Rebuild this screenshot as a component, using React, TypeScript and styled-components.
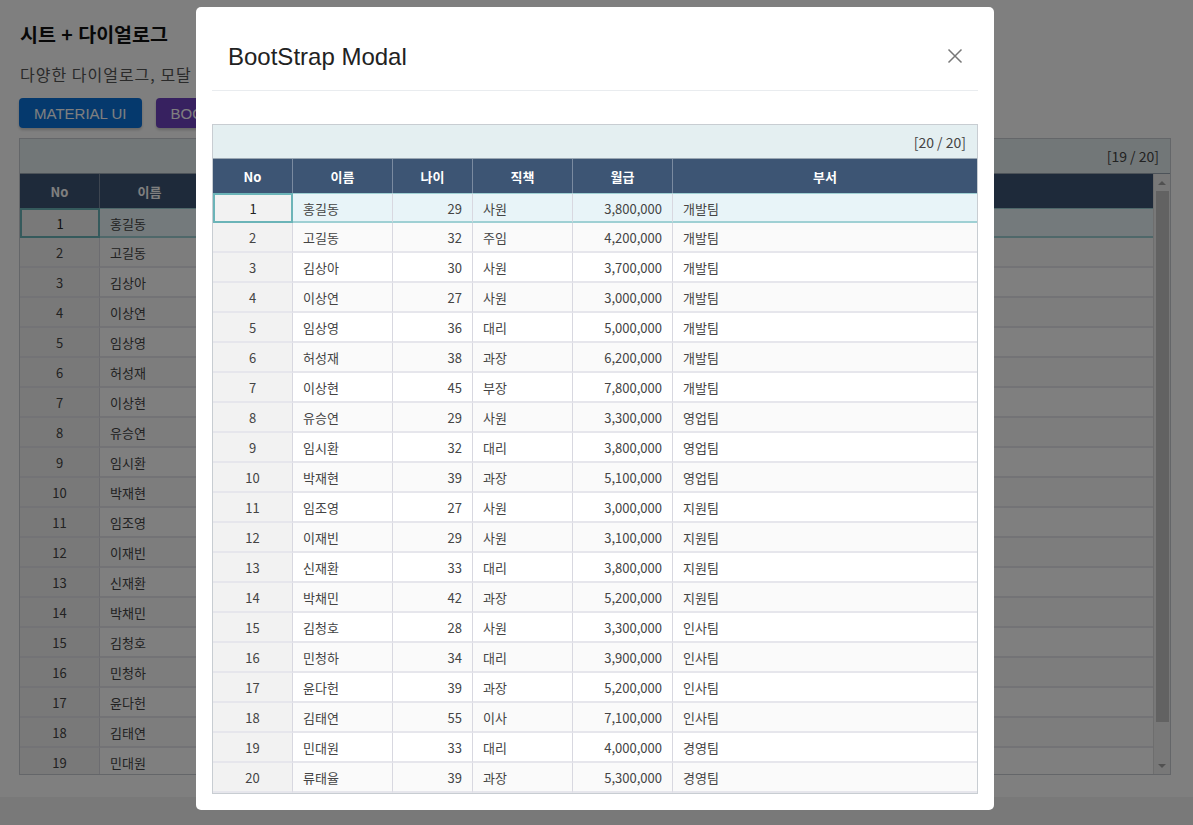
import styled, { createGlobalStyle, css } from "styled-components";

const GlobalStyle = createGlobalStyle`
  html, body {
    margin: 0;
    padding: 0;
    background: #f3f3f3;
  }
  body {
    font-family: "Noto Sans CJK KR", "Noto Sans", sans-serif;
    color: #333;
  }
`;

type Row = [number, string, number, string, string, string];

const rows: Row[] = [
  [1, "홍길동", 29, "사원", "3,800,000", "개발팀"],
  [2, "고길동", 32, "주임", "4,200,000", "개발팀"],
  [3, "김상아", 30, "사원", "3,700,000", "개발팀"],
  [4, "이상연", 27, "사원", "3,000,000", "개발팀"],
  [5, "임상영", 36, "대리", "5,000,000", "개발팀"],
  [6, "허성재", 38, "과장", "6,200,000", "개발팀"],
  [7, "이상현", 45, "부장", "7,800,000", "개발팀"],
  [8, "유승연", 29, "사원", "3,300,000", "영업팀"],
  [9, "임시환", 32, "대리", "3,800,000", "영업팀"],
  [10, "박재현", 39, "과장", "5,100,000", "영업팀"],
  [11, "임조영", 27, "사원", "3,000,000", "지원팀"],
  [12, "이재빈", 29, "사원", "3,100,000", "지원팀"],
  [13, "신재환", 33, "대리", "3,800,000", "지원팀"],
  [14, "박채민", 42, "과장", "5,200,000", "지원팀"],
  [15, "김청호", 28, "사원", "3,300,000", "인사팀"],
  [16, "민청하", 34, "대리", "3,900,000", "인사팀"],
  [17, "윤다헌", 39, "과장", "5,200,000", "인사팀"],
  [18, "김태연", 55, "이사", "7,100,000", "인사팀"],
  [19, "민대원", 33, "대리", "4,000,000", "경영팀"],
  [20, "류태율", 39, "과장", "5,300,000", "경영팀"],
];

const columns = ["No", "이름", "나이", "직책", "월급", "부서"];
const align: ("center" | "left" | "right")[] = ["center", "left", "right", "left", "right", "left"];
const COLS = "80px 100px 80px 100px 100px 1fr";

/* ---------- page behind the modal ---------- */

const Page = styled.div`
  background: #fff;
  min-height: 797px;
  padding: 20px 22px 0 19px;
  box-sizing: border-box;
`;

const Title = styled.h2`
  margin: 0 0 0 1px;
  font-size: 19.5px;
  line-height: 28px;
  font-weight: 700;
  color: #111;
  word-spacing: 1px;
`;

const Sub = styled.p`
  margin: 14px 0 0 1px;
  font-size: 16px;
  line-height: 24px;
  color: #555;
  letter-spacing: 1px;
`;

const ButtonRow = styled.div`
  display: flex;
  gap: 14px;
  margin-top: 12px;
`;

const Btn = styled.button<{ $color: string }>`
  height: 30px;
  padding: 0 15px;
  border: none;
  border-radius: 4px;
  background: ${(p) => p.$color};
  color: #fff;
  font-family: "Liberation Sans", Arial, sans-serif;
  font-size: 15px;
  box-shadow: 0 2px 3px rgba(0, 0, 0, 0.2);
`;

const Sheet = styled.div<{ $width?: string }>`
  width: ${(p) => p.$width || "100%"};
  border: 1px solid #c8cdd2;
  box-sizing: border-box;
  background: #fff;
  font-size: 13px;
`;

const InfoBar = styled.div<{ $h: number }>`
  height: ${(p) => p.$h}px;
  background: #e4eff1;
  border-bottom: 1px solid #9aa7b3;
  display: flex;
  align-items: center;
  justify-content: flex-end;
  padding-right: 11px;
  color: #444;
  font-size: 14px;
  box-sizing: border-box;
`;

const GridRow = styled.div<{ $h: number }>`
  display: grid;
  grid-template-columns: ${COLS};
  height: ${(p) => p.$h}px;
`;

const HeadCell = styled.div`
  background: #3d5574;
  color: #fff;
  font-weight: 700;
  display: flex;
  align-items: center;
  justify-content: center;
  border-right: 1px solid #7a8aa0;
  &:last-child {
    border-right: none;
  }
`;

const Cell = styled.div<{ $align: string; $no?: boolean; $alt?: boolean; $sel?: boolean }>`
  display: flex;
  align-items: center;
  justify-content: ${(p) => (p.$align === "center" ? "center" : p.$align === "right" ? "flex-end" : "flex-start")};
  padding: 1px 10px 0;
  background: ${(p) => (p.$no ? "#f2f2f2" : p.$alt ? "#fafafa" : "#fff")};
  color: #444;
  border-right: 1px solid #d8d8e0;
  border-bottom: 2px solid #e6e6ec;
  box-sizing: border-box;
  white-space: nowrap;
  &:last-child {
    border-right: none;
  }
  ${(p) =>
    p.$sel &&
    css`
      background: ${p.$no ? "#f2f2f2" : "#e8f4f8"};
      border-top: 1px solid #9fd0d4;
      border-bottom: 2px solid #9fd0d4;
    `}
  ${(p) =>
    p.$sel &&
    p.$no &&
    css`
      border: 2px solid #6bb4b8;
      color: #222;
    `}
`;

const Body = styled.div<{ $h?: number }>`
  position: relative;
  overflow: hidden;
  ${(p) => p.$h && css`height: ${p.$h}px;`}
`;

const BgGridWrap = styled.div`
  display: grid;
  grid-template-columns: 1fr 17px;
`;

const Scrollbar = styled.div`
  background: #f1f1f1;
  border-left: 1px solid #ddd;
  display: flex;
  flex-direction: column;
  align-items: center;
`;

const Arrow = styled.div<{ $down?: boolean }>`
  height: 17px;
  display: flex;
  align-items: center;
  justify-content: center;
  &::after {
    content: "";
    border-left: 4px solid transparent;
    border-right: 4px solid transparent;
    ${(p) => (p.$down ? "border-top: 4px solid #a3a3a3;" : "border-bottom: 4px solid #a3a3a3;")}
  }
`;

const Thumb = styled.div`
  width: 13px;
  height: 531px;
  background: #c4c4c4;
`;

const Spacer = styled.div`
  flex: 1;
`;

const SheetSlot = styled.div`
  margin-top: 10px;
`;

function SheetRows({ count }: { count: number }) {
  return (
    <>
      {rows.slice(0, count).map((r, i) => (
        <GridRow $h={30} key={r[0]}>
          {r.map((v, j) => (
            <Cell key={j} $align={align[j]} $no={j === 0} $alt={i % 2 === 1} $sel={i === 0}>
              {v}
            </Cell>
          ))}
        </GridRow>
      ))}
    </>
  );
}

function HeaderRow({ h }: { h: number }) {
  return (
    <GridRow $h={h}>
      {columns.map((c) => (
        <HeadCell key={c}>{c}</HeadCell>
      ))}
    </GridRow>
  );
}

/* ---------- modal ---------- */

const Backdrop = styled.div`
  position: fixed;
  inset: 0;
  background: rgba(0, 0, 0, 0.5);
`;

const Modal = styled.div`
  position: fixed;
  left: 196px;
  top: 7px;
  width: 798px;
  height: 803px;
  background: #fff;
  border-radius: 5px;
  padding: 0 16px;
  box-sizing: border-box;
  display: flex;
  flex-direction: column;
`;

const ModalHeader = styled.div`
  height: 84px;
  border-bottom: 1px solid #e9ecef;
  display: flex;
  align-items: center;
  justify-content: space-between;
  padding: 16px 16px 0;
  box-sizing: border-box;
`;

const ModalTitle = styled.h4`
  margin: 0;
  font-family: "Liberation Sans", Arial, sans-serif;
  font-weight: 400;
  font-size: 24px;
  color: #222;
`;

const Close = styled.button`
  border: none;
  background: none;
  padding: 0;
  width: 16px;
  height: 16px;
  display: flex;
  align-items: center;
  justify-content: center;
  margin-right: -1px;
  margin-top: -2px;
`;

const ModalBody = styled.div`
  padding-top: 33px;
`;

export default function App() {
  return (
    <>
      <GlobalStyle />
      <Page>
        <Title>시트 + 다이얼로그</Title>
        <Sub>다양한 다이얼로그, 모달 팝업 안에서 시트를 사용하는 예제입니다.</Sub>
        <ButtonRow>
          <Btn $color="#0a72db">MATERIAL UI</Btn>
          <Btn $color="#6f42c1">BOOTSTRAP</Btn>
        </ButtonRow>
        <SheetSlot>
          <Sheet $width="1152px">
            <InfoBar $h={35}>[19 / 20]</InfoBar>
            <BgGridWrap>
              <div>
                <HeaderRow h={34} />
                <Body $h={566}>
                  <SheetRows count={19} />
                </Body>
              </div>
              <Scrollbar>
                <Arrow />
                <Thumb />
                <Spacer />
                <Arrow $down />
              </Scrollbar>
            </BgGridWrap>
          </Sheet>
        </SheetSlot>
      </Page>
      <Backdrop />
      <Modal>
        <ModalHeader>
          <ModalTitle>BootStrap Modal</ModalTitle>
          <Close aria-label="close">
            <svg width="16" height="16" viewBox="0 0 16 16">
              <path d="M1.5 1.5 L14.5 14.5 M14.5 1.5 L1.5 14.5" stroke="#777" strokeWidth="1.5" />
            </svg>
          </Close>
        </ModalHeader>
        <ModalBody>
          <Sheet>
            <InfoBar $h={34}>[20 / 20]</InfoBar>
            <HeaderRow h={34} />
            <Body>
              <SheetRows count={20} />
            </Body>
          </Sheet>
        </ModalBody>
      </Modal>
    </>
  );
}
